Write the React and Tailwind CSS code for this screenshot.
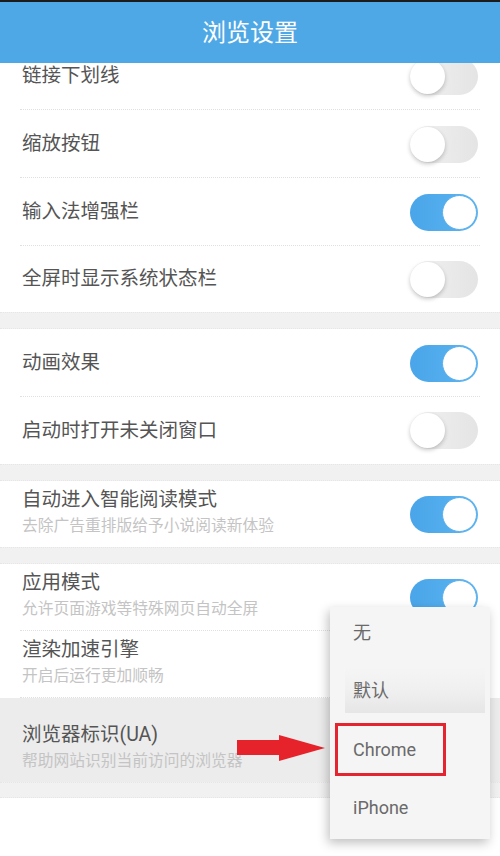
import React from 'react'

const font = { fontFamily: 'Roboto, "Noto Sans CJK SC", sans-serif' }

function Toggle({ on }) {
  if (on) {
    return (
      <div className="relative h-[37px] w-[68px] shrink-0 rounded-full bg-gradient-to-r from-[#4aa5e9] to-[#5bb5f1]">
        <div className="absolute right-[1px] top-[1px] h-[35px] w-[35px] rounded-full border border-[#5aaeee] bg-white" />
      </div>
    )
  }
  return (
    <div className="relative h-[37px] w-[68px] shrink-0 rounded-full bg-gradient-to-r from-[#f2f2f2] to-[#e4e4e4]">
      <div className="absolute left-0 top-[1px] h-[35px] w-[35px] rounded-full bg-white shadow-[0_2px_4px_rgba(0,0,0,0.22)]" />
    </div>
  )
}

function Row({ title, on, divider = true, h = 'h-[68px]' }) {
  return (
    <div className={`${h} flex items-center justify-between pl-[22px] pr-[22px] relative`}>
      <span className="text-[19.5px] text-[#555]">{title}</span>
      {on !== undefined && <Toggle on={on} />}
      {divider && <div className="absolute bottom-0 left-[20px] right-[20px] border-b border-dotted border-[#e0e0e0]" />}
    </div>
  )
}

function Row2({ title, sub, on, divider = true, className = 'h-[67px] pt-[6px]' }) {
  return (
    <div className={`${className} flex justify-between pl-[22px] pr-[22px] relative`}>
      <div className="flex flex-col">
        <span className="text-[19.5px] leading-[26px] text-[#555]">{title}</span>
        <span className="mt-[2px] text-[15.75px] leading-[22px] text-[#c4c4c4]">{sub}</span>
      </div>
      {on !== undefined && (
        <div className="pt-[9px]">
          <Toggle on={on} />
        </div>
      )}
      {divider && <div className="absolute bottom-0 left-[20px] right-[20px] border-b border-dotted border-[#e0e0e0]" />}
    </div>
  )
}

function Band({ h = 'h-[17px]' }) {
  return <div className={`${h} bg-[#f1f1f1] border-y border-dotted border-[#e6e6e6]`} />
}

export default function App() {
  return (
    <div className="relative h-[856px] w-[500px] overflow-hidden bg-white" style={font}>
      <div className="h-[2px] bg-[#1c1c1c]" />
      <div className="relative z-10 flex h-[61px] items-center justify-center bg-[#4fa8e6]">
        <span className="text-[24px] text-white">浏览设置</span>
      </div>

      <div className="-mt-[21px]">
        <Row title="链接下划线" on={false} />
        <Row title="缩放按钮" on={false} />
        <Row title="输入法增强栏" on={true} />
        <Row title="全屏时显示系统状态栏" on={false} divider={false} h="h-[66px]" />
        <Band />
        <Row title="动画效果" on={true} />
        <Row title="启动时打开未关闭窗口" on={false} divider={false} h="h-[67px]" />
        <Band />
        <Row2 title="自动进入智能阅读模式" sub="去除广告重排版给予小说阅读新体验" on={true} divider={false} className="h-[66px] pt-[6px]" />
        <Band />
        <Row2 title="应用模式" sub="允许页面游戏等特殊网页自动全屏" on={true} />
        <Row2 title="渲染加速引擎" sub="开启后运行更加顺畅" />
        <div className="bg-[#ececec]">
          <Row2 title="浏览器标识(UA)" sub="帮助网站识别当前访问的浏览器" divider={false} className="h-[84px] pt-[24px]" />
        </div>
        <Band h="h-[16px]" />
      </div>

      {/* red arrow annotation */}
      <svg className="absolute left-[237px] top-[735px]" width="90" height="26" viewBox="0 0 90 26">
        <path d="M0 5 H42 V0 L88 13 L42 26 V20 H0 Z" fill="#e6232b" />
      </svg>

      {/* dropdown menu */}
      <div className="absolute left-[330px] top-[607px] w-[160px] bg-[#f5f5f5] text-[18px] text-[#6a6a6a] shadow-[-2px_4px_10px_rgba(0,0,0,0.25)]">
        <div className="flex h-[58px] items-center pb-[8px] pl-[23px]">无</div>
        <div className="flex h-[58px] items-center pb-[8px] pl-[23px]">
          <div className="flex h-[46px] w-[140px] -ml-[8px] items-center bg-gradient-to-b from-[#f5f5f5] via-[#f0f0f0] to-[#e6e6e6] pl-[8px]">默认</div>
        </div>
        <div className="relative flex h-[58px] items-center pb-[6px] pl-[23px]">
          <span>Chrome</span>
          <div className="absolute left-[5px] top-0 h-[53px] w-[111px] border-[3px] border-[#e42530]" />
        </div>
        <div className="flex h-[58px] items-center pb-[6px] pl-[23px]">iPhone</div>
      </div>
    </div>
  )
}
